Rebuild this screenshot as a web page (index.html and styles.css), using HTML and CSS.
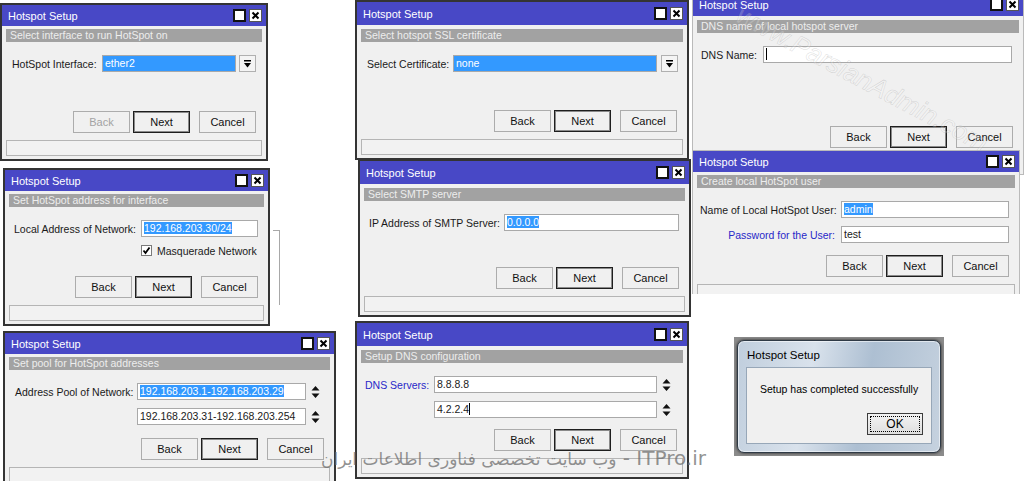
FILE: index.html
```html
<!DOCTYPE html>
<html lang="en">
<head>
  <meta charset="UTF-8">
  <title>Hotspot Setup</title>
  <link rel="stylesheet" href="styles.css">
</head>
<body>
<div class="desk">

  <!-- step 1: interface -->
  <div class="win w1">
    <div class="title">
      <span class="name">Hotspot Setup</span>
      <span class="tb tb-max"></span>
      <span class="tb tb-close"><svg width="9" height="9" viewBox="0 0 9 9"><path d="M1.5 1.5l6 6M7.5 1.5l-6 6" stroke="#000" stroke-width="2"/></svg></span>
    </div>
    <div class="head">Select interface to run HotSpot on</div>
    <div class="form">
      <div class="row">
        <span class="label">HotSpot Interface:</span>
        <span class="field chosen">ether2</span>
        <span class="drop"><svg width="7" height="8" viewBox="0 0 7 8"><rect width="7" height="1.5" fill="#000"/><path d="M0 3h7l-3.5 4.5z" fill="#000"/></svg></span>
      </div>
    </div>
    <div class="actions">
      <button class="btn" disabled>Back</button>
      <button class="btn def">Next</button>
      <button class="btn">Cancel</button>
    </div>
    <div class="status"></div>
  </div>

  <div class="frag"></div>

  <!-- step 2: address -->
  <div class="win w2">
    <div class="title">
      <span class="name">Hotspot Setup</span>
      <span class="tb tb-max"></span>
      <span class="tb tb-close"><svg width="9" height="9" viewBox="0 0 9 9"><path d="M1.5 1.5l6 6M7.5 1.5l-6 6" stroke="#000" stroke-width="2"/></svg></span>
    </div>
    <div class="head">Set HotSpot address for interface</div>
    <div class="form">
      <div class="row">
        <span class="label">Local Address of Network:</span>
        <span class="field"><span class="sel">192.168.203.30/24</span></span>
      </div>
      <div class="row check-row">
        <span class="label"></span>
        <span class="check"><svg width="9" height="9" viewBox="0 0 9 9"><path d="M1.5 4.5l2 2.5 4-5.5" fill="none" stroke="#000" stroke-width="1.8"/></svg></span>
        <span class="check-text">Masquerade Network</span>
      </div>
    </div>
    <div class="actions">
      <button class="btn">Back</button>
      <button class="btn def">Next</button>
      <button class="btn">Cancel</button>
    </div>
    <div class="status"></div>
  </div>

  <!-- step 3: pool -->
  <div class="win w3">
    <div class="title">
      <span class="name">Hotspot Setup</span>
      <span class="tb tb-max"></span>
      <span class="tb tb-close"><svg width="9" height="9" viewBox="0 0 9 9"><path d="M1.5 1.5l6 6M7.5 1.5l-6 6" stroke="#000" stroke-width="2"/></svg></span>
    </div>
    <div class="head">Set pool for HotSpot addresses</div>
    <div class="form">
      <div class="row">
        <span class="label">Address Pool of Network:</span>
        <span class="field"><span class="sel">192.168.203.1-192.168.203.29</span></span>
        <span class="spin"><svg width="9" height="14" viewBox="0 0 9 14"><path d="M0.5 5.5h8L4.5 1zM0.5 8.5h8L4.5 13z" fill="#111"/></svg></span>
      </div>
      <div class="row">
        <span class="label"></span>
        <span class="field">192.168.203.31-192.168.203.254</span>
        <span class="spin"><svg width="9" height="14" viewBox="0 0 9 14"><path d="M0.5 5.5h8L4.5 1zM0.5 8.5h8L4.5 13z" fill="#111"/></svg></span>
      </div>
    </div>
    <div class="actions">
      <button class="btn">Back</button>
      <button class="btn def">Next</button>
      <button class="btn">Cancel</button>
    </div>
    <div class="status"></div>
  </div>

  <!-- step 4: certificate -->
  <div class="win tall w4">
    <div class="title">
      <span class="name">Hotspot Setup</span>
      <span class="tb tb-max"></span>
      <span class="tb tb-close"><svg width="9" height="9" viewBox="0 0 9 9"><path d="M1.5 1.5l6 6M7.5 1.5l-6 6" stroke="#000" stroke-width="2"/></svg></span>
    </div>
    <div class="head">Select hotspot SSL certificate</div>
    <div class="form">
      <div class="row">
        <span class="label">Select Certificate:</span>
        <span class="field chosen">none</span>
        <span class="drop"><svg width="7" height="8" viewBox="0 0 7 8"><rect width="7" height="1.5" fill="#000"/><path d="M0 3h7l-3.5 4.5z" fill="#000"/></svg></span>
      </div>
    </div>
    <div class="actions">
      <button class="btn">Back</button>
      <button class="btn def">Next</button>
      <button class="btn">Cancel</button>
    </div>
    <div class="status"></div>
  </div>

  <!-- step 5: smtp -->
  <div class="win tall w5">
    <div class="title">
      <span class="name">Hotspot Setup</span>
      <span class="tb tb-max"></span>
      <span class="tb tb-close"><svg width="9" height="9" viewBox="0 0 9 9"><path d="M1.5 1.5l6 6M7.5 1.5l-6 6" stroke="#000" stroke-width="2"/></svg></span>
    </div>
    <div class="head">Select SMTP server</div>
    <div class="form">
      <div class="row">
        <span class="label">IP Address of SMTP Server:</span>
        <span class="field"><span class="sel">0.0.0.0</span></span>
      </div>
    </div>
    <div class="actions">
      <button class="btn">Back</button>
      <button class="btn def">Next</button>
      <button class="btn">Cancel</button>
    </div>
    <div class="status"></div>
  </div>

  <!-- step 6: dns servers -->
  <div class="win tall w6">
    <div class="title">
      <span class="name">Hotspot Setup</span>
      <span class="tb tb-max"></span>
      <span class="tb tb-close"><svg width="9" height="9" viewBox="0 0 9 9"><path d="M1.5 1.5l6 6M7.5 1.5l-6 6" stroke="#000" stroke-width="2"/></svg></span>
    </div>
    <div class="head">Setup DNS configuration</div>
    <div class="form">
      <div class="row">
        <span class="label blue">DNS Servers:</span>
        <span class="field">8.8.8.8</span>
        <span class="spin"><svg width="9" height="14" viewBox="0 0 9 14"><path d="M0.5 5.5h8L4.5 1zM0.5 8.5h8L4.5 13z" fill="#111"/></svg></span>
      </div>
      <div class="row">
        <span class="label"></span>
        <span class="field">4.2.2.4<span class="caret"></span></span>
        <span class="spin"><svg width="9" height="14" viewBox="0 0 9 14"><path d="M0.5 5.5h8L4.5 1zM0.5 8.5h8L4.5 13z" fill="#111"/></svg></span>
      </div>
    </div>
    <div class="actions">
      <button class="btn">Back</button>
      <button class="btn def">Next</button>
      <button class="btn">Cancel</button>
    </div>
    <div class="status"></div>
  </div>

  <!-- step 7: dns name -->
  <div class="win tall light w7">
    <div class="title">
      <span class="name">Hotspot Setup</span>
      <span class="tb tb-max"></span>
      <span class="tb tb-close"><svg width="9" height="9" viewBox="0 0 9 9"><path d="M1.5 1.5l6 6M7.5 1.5l-6 6" stroke="#000" stroke-width="2"/></svg></span>
    </div>
    <div class="head">DNS name of local hotspot server</div>
    <div class="form">
      <div class="row">
        <span class="label">DNS Name:</span>
        <span class="field"><span class="caret"></span></span>
      </div>
    </div>
    <div class="actions">
      <button class="btn">Back</button>
      <button class="btn def">Next</button>
      <button class="btn">Cancel</button>
    </div>
    <div class="status"></div>
  </div>

  <!-- step 8: user -->
  <div class="win light w8">
    <div class="title">
      <span class="name">Hotspot Setup</span>
      <span class="tb tb-max"></span>
      <span class="tb tb-close"><svg width="9" height="9" viewBox="0 0 9 9"><path d="M1.5 1.5l6 6M7.5 1.5l-6 6" stroke="#000" stroke-width="2"/></svg></span>
    </div>
    <div class="head">Create local HotSpot user</div>
    <div class="form">
      <div class="row">
        <span class="label">Name of Local HotSpot User:</span>
        <span class="field"><span class="sel">admin</span></span>
      </div>
      <div class="row">
        <span class="label blue">Password for the User:</span>
        <span class="field">test</span>
      </div>
    </div>
    <div class="actions">
      <button class="btn">Back</button>
      <button class="btn def">Next</button>
      <button class="btn">Cancel</button>
    </div>
    <div class="status"></div>
  </div>

  <!-- final message box -->
  <div class="msg">
    <div class="msg-frame">
      <div class="msg-title">Hotspot Setup</div>
      <div class="msg-body">
        <p class="msg-text">Setup has completed successfully</p>
        <button class="ok">OK</button>
      </div>
    </div>
  </div>

  <div class="wm-diag">www.ParsianAdmin.com</div>
  <div class="wm-fa">ITPro.ir - <span class="fa">وب سایت تخصصی فناوری اطلاعات ایران</span></div>

</div>
</body>
</html>
```

FILE: styles.css
```css
* {
  box-sizing: border-box;
}
body {
  margin: 0;
  background: #fff;
  font-family: "Liberation Sans", Arial, sans-serif;
  font-size: 10.5px;
  color: #1a1a1a;
}
.desk {
  position: relative;
  width: 1024px;
  height: 481px;
  overflow: hidden;
}

/* winbox dialog */
.win {
  position: absolute;
  display: flex;
  flex-direction: column;
  background: #f0f0f0;
  border: 2px solid #343434;
}
.win.light {
  border: 1px solid #bababa;
}
.title {
  flex: none;
  height: 21px;
  display: flex;
  align-items: center;
  gap: 3px;
  padding: 0 4px 0 6px;
  background: #4848c6;
  color: #fff;
  font-size: 11px;
}
.tall .title {
  height: 23px;
}
.title .name {
  flex: 1;
}
.tb {
  width: 13px;
  height: 13px;
  display: flex;
  align-items: center;
  justify-content: center;
  background: #fff;
}
.tb-max {
  border: 2px solid #111;
}
.tb-close {
  border: 1px solid #555;
}
.head {
  flex: none;
  height: 13px;
  margin: 3px 4px 0;
  padding-left: 4px;
  line-height: 13px;
  background: #a2a2a2;
  color: #ededed;
  white-space: nowrap;
}
.tall .head {
  margin-top: 4px;
}
.form {
  flex: none;
  display: flex;
  flex-direction: column;
  gap: 8px;
  padding: 13px 10px 0;
}
.row {
  display: flex;
  align-items: center;
  height: 17px;
}
.row.check-row {
  height: 11px;
}
.label {
  flex: none;
  margin-right: 6px;
  text-align: right;
  white-space: nowrap;
}
.label.blue {
  color: #2828c8;
}
.field {
  flex: 1;
  height: 17px;
  padding-left: 2px;
  line-height: 15px;
  background: #fff;
  border: 1px solid #a9a9a9;
  white-space: nowrap;
  overflow: hidden;
}
.field.chosen {
  background: #3399ff;
  color: #fff;
}
.sel {
  background: #3399ff;
  color: #fff;
}
.caret {
  display: inline-block;
  width: 1px;
  height: 12px;
  background: #000;
  vertical-align: -2px;
}
.drop {
  flex: none;
  width: 17px;
  height: 17px;
  margin-left: 3px;
  display: flex;
  align-items: center;
  justify-content: center;
  background: #f4f4f4;
  border: 1px solid #b0b0b0;
}
.spin {
  flex: none;
  width: 9px;
  margin-left: 5px;
  display: flex;
}
.check {
  width: 11px;
  height: 11px;
  display: flex;
  align-items: center;
  justify-content: center;
  background: #fff;
  border: 1px solid #7a7a7a;
}
.check-text {
  margin-left: 5px;
}
.actions {
  flex: none;
  margin-top: auto;
  display: flex;
  justify-content: flex-end;
  gap: 3px;
  padding-right: 10px;
}
.btn {
  width: 57px;
  height: 22px;
  padding: 0;
  font: inherit;
  font-size: 11px;
  color: #111;
  background: #f0f0f0;
  border: 1px solid #acacac;
}
.btn.def {
  margin-right: 6px;
  border-color: #1e1e1e;
  box-shadow: inset 0 0 0 1px #8a8a8a;
}
.btn:disabled {
  color: #a3a3a3;
}
.status {
  flex: none;
  height: 16px;
  margin: 7px 4px 3px;
  background: #f2f2f2;
  border: 1px solid #b5b5b5;
}

/* windows on the desktop */
.w1 { left: 0; top: 3px; width: 268px; height: 158px; }
.w1 .form { padding-left: 10px; }
.w1 .label { width: 84px; }

.w2 { left: 3px; top: 168px; width: 267px; height: 158px; }
.w2 .form { padding-left: 9px; }
.w2 .label { width: 121px; }

.w3 { left: 3px; top: 331px; width: 333px; height: 157px; }
.w3 .form { padding-right: 14px; }
.w3 .label { width: 116px; }

.w4 { left: 355px; top: 0; width: 334px; height: 160px; }
.w4 .form { padding-right: 9px; }
.w4 .label { width: 80px; }
.w4 .drop { margin-left: 4px; }

.w5 { left: 358px; top: 159px; width: 333px; height: 158px; }
.w5 .form { padding-left: 9px; }
.w5 .label { width: 129px; }

.w6 { left: 355px; top: 321px; width: 334px; height: 158px; }
.w6 .form { padding-left: 8px; padding-right: 16px; }
.w6 .label { width: 63px; }

.w7 { left: 692px; top: -8px; width: 332px; height: 183px; }
.w7 .form { padding-left: 7px; padding-right: 11px; }
.w7 .label { width: 57px; }

.w8 { left: 692px; top: 150px; width: 328px; height: 154px; clip-path: inset(0 0 10px 0); }
.w8 .form { padding-left: 7px; }
.w8 .label { width: 135px; }

.frag {
  position: absolute;
  left: 273px;
  top: 230px;
  width: 7px;
  height: 75px;
  border-top: 1px solid #a8a8a8;
  border-right: 1px solid #a8a8a8;
}

/* windows 7 message box */
.msg {
  position: absolute;
  left: 734px;
  top: 337px;
  width: 210px;
  height: 119px;
  padding: 3px;
  background: #8b8b8b;
}
.msg-frame {
  height: 100%;
  display: flex;
  flex-direction: column;
  padding: 0 8px 8px;
  border: 1px solid #2f3a46;
  border-radius: 7px;
  background: linear-gradient(100deg, #c0cedd 0%, #d9e2ec 35%, #adbfd2 62%, #c6d2df 100%);
  box-shadow: 0 0 3px rgba(0, 0, 0, 0.8), inset 0 0 0 1px rgba(255, 255, 255, 0.55);
}
.msg-title {
  height: 26px;
  line-height: 28px;
  padding-left: 1px;
  font-size: 11.5px;
  color: #000;
}
.msg-body {
  flex: 1;
  display: flex;
  flex-direction: column;
  padding: 14px 8px 8px 13px;
  background: #f0f0f0;
  border: 1px solid #97a7b8;
}
.msg-text {
  margin: 0;
  line-height: 14px;
  font-size: 10.5px;
  color: #000;
}
.ok {
  margin-top: auto;
  align-self: flex-end;
  width: 56px;
  height: 22px;
  padding: 0;
  font-family: inherit;
  font-size: 12px;
  color: #000;
  background: linear-gradient(#f3f3f3, #dedede);
  border: 1px solid #3c3c3c;
  outline: 1px dotted #000;
  outline-offset: -4px;
}

/* watermarks */
.wm-diag {
  position: absolute;
  left: 862px;
  top: 79px;
  transform: translate(-50%, -50%) rotate(28deg);
  font: italic 26px "Liberation Sans", Arial, sans-serif;
  color: rgba(255, 255, 255, 0.2);
  -webkit-text-stroke: 0.5px rgba(150, 150, 150, 0.35);
  white-space: nowrap;
}
.wm-fa {
  position: absolute;
  right: 318px;
  top: 446px;
  direction: rtl;
  font-family: "DejaVu Sans", sans-serif;
  font-size: 20px;
  color: rgba(110, 110, 110, 0.75);
  white-space: nowrap;
}
.wm-fa .fa {
  font-size: 17px;
}
```
